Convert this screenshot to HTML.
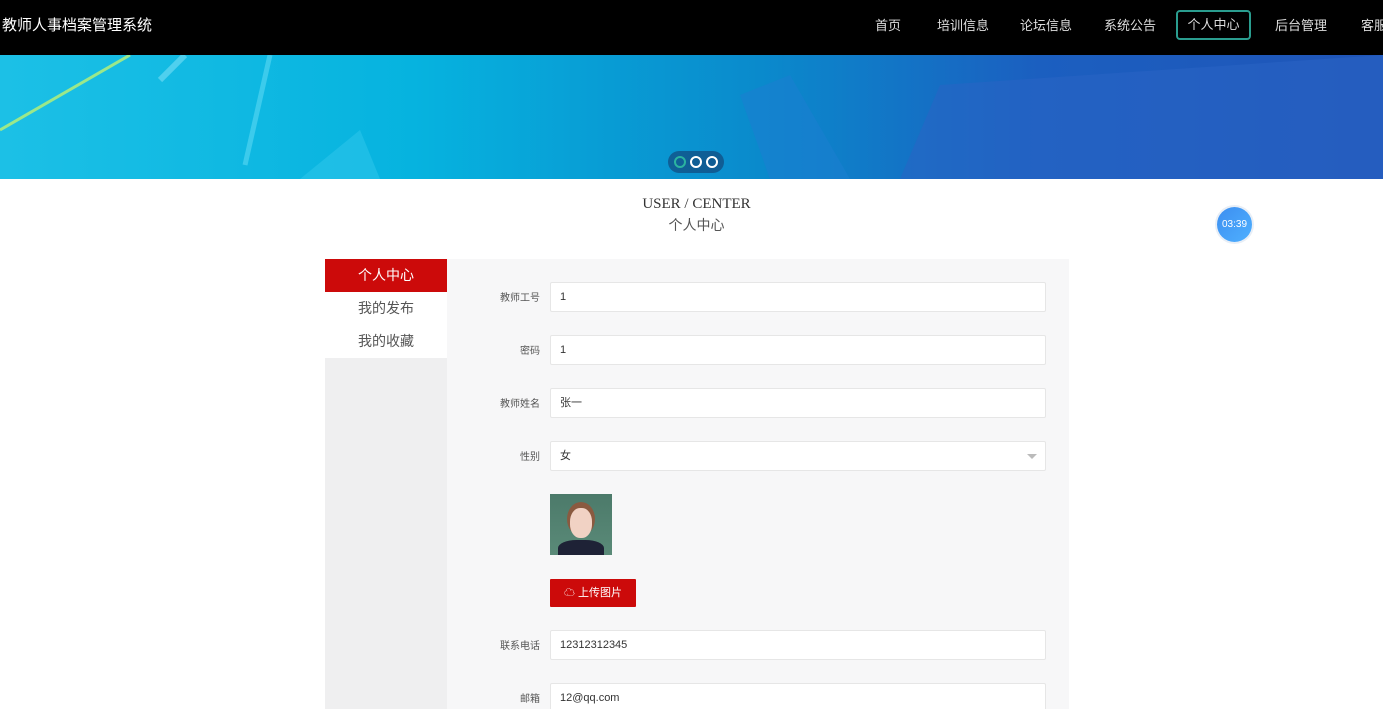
<!DOCTYPE html>
<html><head><meta charset="utf-8"><style>
*{margin:0;padding:0;box-sizing:border-box}
html,body{width:1383px;height:709px;overflow:hidden}
body{background:#fff;font-family:"Liberation Sans","Noto Sans CJK SC",sans-serif;position:relative}
.top{position:absolute;left:0;top:0;width:1383px;height:55px;background:#000}
.logo{position:absolute;left:2px;top:14px;color:#fff;font-size:15px}
.nav a{position:absolute;top:15px;color:#ddd;font-size:13px;text-decoration:none;white-space:nowrap}
.act{position:absolute;left:1176px;top:10px;width:75px;height:30px;border:2px solid #2a9d8f;border-radius:4px;color:#ddd;font-size:13px;text-align:center;line-height:25px}
.banner{position:absolute;left:0;top:55px;width:1383px;height:124px;background:linear-gradient(90deg,#1cc0e6 0%,#06b3df 30%,#0a8acc 55%,#1b5fc0 75%,#2055b8 100%);overflow:hidden}
.dots{position:absolute;left:668px;top:151px;width:56px;height:22px;background:rgba(20,60,110,.6);border-radius:11px}
.dots i{position:absolute;top:5px;width:12px;height:12px;border:2px solid #fff;border-radius:50%}
.h1{position:absolute;top:196px;left:0;width:1393px;text-align:center;font-family:"Liberation Serif","Noto Serif CJK SC",serif;font-size:15px;color:#333}
.h2{position:absolute;top:215px;left:0;width:1393px;text-align:center;font-size:14px;color:#555}
.timer{position:absolute;left:1217px;top:207px;width:35px;height:35px;border-radius:50%;background:linear-gradient(135deg,#3c8ef0,#4fb0ff);color:#fff;font-size:10px;text-align:center;line-height:35px;box-shadow:0 0 0 2px #e8eef6}
.side{position:absolute;left:325px;top:259px;width:122px;height:450px;background:#efeff0}
.side div{height:33px;line-height:33px;text-align:center;font-size:14px;color:#555;background:#fff}
.side .on{background:#cc0a0a;color:#fff}
.main{position:absolute;left:447px;top:259px;width:622px;height:450px;background:#f7f7f8}
.lab{position:absolute;width:93px;text-align:right;font-size:10px;color:#555;left:447px}
.inp{position:absolute;left:550px;width:496px;height:30px;background:#fff;border:1px solid #e6e6e6;border-radius:2px;font-size:11px;color:#333;padding-left:9px;line-height:28px}
.btn{position:absolute;left:550px;top:579px;width:86px;height:28px;background:#cc0a0a;color:#fff;font-size:11px;line-height:28px;text-align:center;border-radius:1px}
.photo{position:absolute;left:550px;top:494px;width:62px;height:61px;background:linear-gradient(#4c7a6a,#5a8a78);overflow:hidden}
</style></head><body>
<div class="top"><div class="logo">教师人事档案管理系统</div>
<div class="nav"><a style="left:875px">首页</a><a style="left:937px">培训信息</a><a style="left:1020px">论坛信息</a><a style="left:1104px">系统公告</a><a style="left:1275px">后台管理</a><a style="left:1361px">客服</a></div>
<div class="act">个人中心</div></div>
<div class="banner">
<svg width="1383" height="124" style="position:absolute;left:0;top:0">
<line x1="0" y1="75" x2="130" y2="0" stroke="#9be88a" stroke-width="3"/>
<line x1="160" y1="25" x2="185" y2="0" stroke="#4fd0ee" stroke-width="6"/>
<line x1="245" y1="110" x2="270" y2="0" stroke="#3ccbec" stroke-width="5"/>
<polygon points="300,124 360,75 380,124" fill="#2cc4ea" opacity=".6"/>
<polygon points="740,40 790,20 850,124 770,124" fill="#1a7ed0" opacity=".6"/>
<polygon points="900,124 940,30 1383,0 1383,124" fill="#2a64c4" opacity=".55"/>
</svg>
</div>
<div class="dots"><i style="left:6px;border-color:#2bb3a0"></i><i style="left:22px"></i><i style="left:38px"></i></div>
<div class="h1">USER / CENTER</div>
<div class="h2">个人中心</div>
<div class="timer">03:39</div>
<div class="side"><div class="on">个人中心</div><div>我的发布</div><div>我的收藏</div></div>
<div class="main"></div>
<div class="lab" style="top:289px">教师工号</div><div class="inp" style="top:282px">1</div>
<div class="lab" style="top:342px">密码</div><div class="inp" style="top:335px">1</div>
<div class="lab" style="top:395px">教师姓名</div><div class="inp" style="top:388px">张一</div>
<div class="lab" style="top:448px">性别</div><div class="inp" style="top:441px">女<span style="position:absolute;right:8px;top:12px;border:5px solid transparent;border-top-color:#bbb;border-bottom:0"></span></div>
<div class="photo"><div style="position:absolute;left:17px;top:8px;width:28px;height:34px;border-radius:50%;background:#8a5a40"></div><div style="position:absolute;left:20px;top:14px;width:22px;height:30px;border-radius:45%;background:#f1d2c4"></div><div style="position:absolute;left:8px;top:46px;width:46px;height:20px;border-radius:40% 40% 0 0;background:#1e2236"></div></div>
<div class="btn">☁ 上传图片</div>
<div class="lab" style="top:637px">联系电话</div><div class="inp" style="top:630px">12312312345</div>
<div class="lab" style="top:690px">邮箱</div><div class="inp" style="top:683px">12@qq.com</div>
</body></html>
